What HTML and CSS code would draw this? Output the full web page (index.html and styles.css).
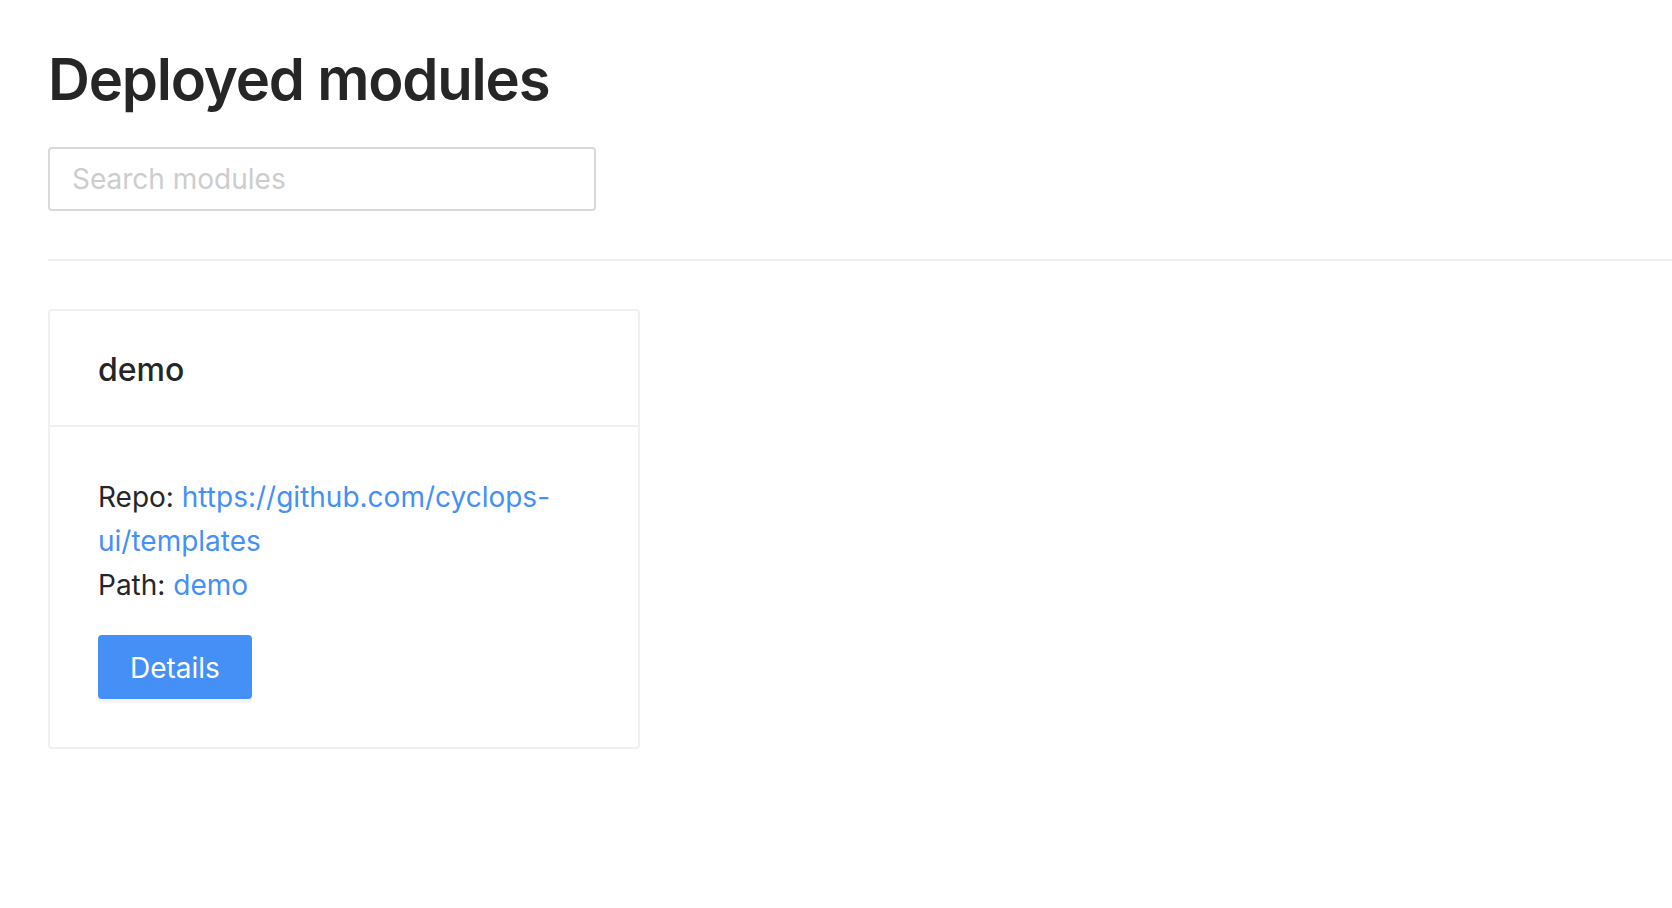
FILE: index.html
```html
<!DOCTYPE html>
<html lang="en">
<head>
<meta charset="utf-8">
<title>Deployed modules</title>
<link rel="stylesheet" href="styles.css">
</head>
<body>
<main class="page">
  <h1 class="page-title">Deployed modules</h1>
  <input class="search" type="text" placeholder="Search modules">
  <div class="divider"></div>
  <section class="card">
    <div class="card-head">demo</div>
    <div class="card-body">
      <div class="line">Repo: <a class="link" href="#">https://github.com/cyclops-ui/templates</a></div>
      <div class="line">Path: <a class="link" href="#">demo</a></div>
      <button class="btn-primary" type="button">Details</button>
    </div>
  </section>
</main>
</body>
</html>
```

FILE: styles.css
```css
html, body {
  margin: 0;
  padding: 0;
  background: #ffffff;
}

body {
  font-family: Inter, "Noto Sans", "Liberation Sans", sans-serif;
  color: #262626;
  font-size: 28px;
  line-height: 44px;
}

.page {
  padding: 40px 0 0 48px;
}

.page-title {
  margin: 0 0 29px 0;
  font-size: 58px;
  font-weight: 600;
  letter-spacing: -1.2px;
  line-height: 78px;
  color: #262626;
}

.search {
  display: block;
  box-sizing: border-box;
  width: 548px;
  height: 64px;
  margin: 0;
  padding: 0 22px;
  border: 2px solid #d9d9d9;
  border-radius: 4px;
  font-family: inherit;
  font-size: 28px;
  color: #262626;
  background: #fff;
  outline: none;
}

.search::placeholder {
  color: #cdcdcd;
}

.divider {
  height: 2px;
  background: #f0f0f0;
  margin: 48px 0 48px 0;
}

.card {
  box-sizing: border-box;
  width: 592px;
  border: 2px solid #f0f0f0;
  border-radius: 4px;
  background: #fff;
}

.card-head {
  display: flex;
  align-items: center;
  box-sizing: border-box;
  height: 116px;
  padding: 4px 48px 0 48px;
  border-bottom: 2px solid #f0f0f0;
  font-size: 32px;
  font-weight: 500;
  color: #262626;
}

.card-body {
  padding: 48px 48px 48px 48px;
}

.line {
  line-height: 44px;
}

.link {
  color: #4590f6;
  text-decoration: none;
}

.btn-primary {
  display: block;
  box-sizing: border-box;
  height: 64px;
  margin-top: 28px;
  padding: 2px 30px 0 30px;
  border: 2px solid #4590f6;
  border-radius: 4px;
  background: #4590f6;
  color: #ffffff;
  font-family: inherit;
  font-size: 28px;
  line-height: 1;
  box-shadow: 0 4px 0 rgba(0, 0, 0, 0.045);
  cursor: pointer;
}
```
